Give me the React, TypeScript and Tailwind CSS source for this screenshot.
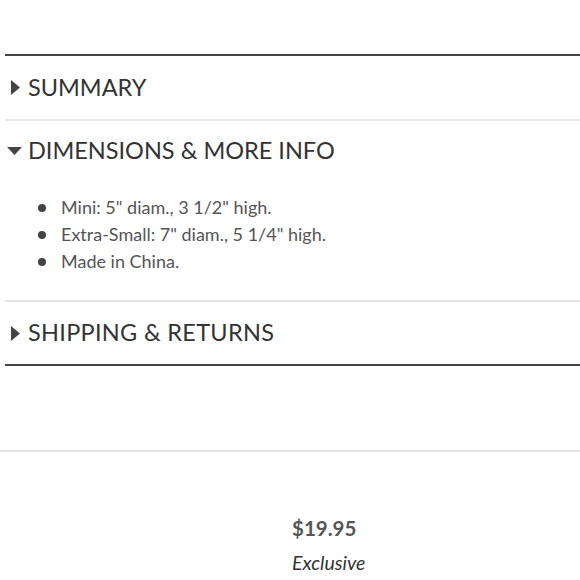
const items = ['Mini: 5" diam., 3 1/2" high.', 'Extra-Small: 7" diam., 5 1/4" high.', "Made in China."];

function RightArrow() {
    return (
        <svg width="9" height="15" viewBox="0 0 9 15" className="shrink-0">
            <path d="M0 0 L9 7.5 L0 15 Z" fill="#444" />
        </svg>
    );
}

function DownArrow() {
    return (
        <svg width="15" height="8" viewBox="0 0 15 8" className="shrink-0">
            <path d="M0 0 L15 0 L7.5 8 Z" fill="#444" />
        </svg>
    );
}

export default function App() {
    return (
        <div className="w-[580px] h-[580px] bg-white overflow-hidden font-['Lato',sans-serif] text-[#333]">
            <div className="h-[54px]" />
            <div className="pl-[5px]">
                <div className="border-t-2 border-[#444]" />
                <div className="h-[63px] flex items-center gap-[8px] pl-[6px]">
                    <RightArrow />
                    <span className="text-[23.5px] leading-none">SUMMARY</span>
                </div>
                <div className="border-t-2 border-[#e6e6e6]" />
                <div className="h-[60px] flex items-center gap-[6px] pl-[2px]">
                    <DownArrow />
                    <span className="text-[23.5px] leading-none">DIMENSIONS &amp; MORE INFO</span>
                </div>
                <ul className="pl-[33px] pt-[13px] pb-[25px] flex flex-col text-[18px] text-[#555]">
                    {items.map((t) => (
                        <li key={t} className="h-[27px] flex items-center gap-[15px]">
                            <span className="w-[8px] h-[8px] rounded-full bg-[#444] inline-block" />
                            {t}
                        </li>
                    ))}
                </ul>
                <div className="border-t-2 border-[#e6e6e6]" />
                <div className="h-[62px] flex items-center gap-[8px] pl-[6px]">
                    <RightArrow />
                    <span className="text-[23.5px] tracking-[0.3px] leading-none">SHIPPING &amp; RETURNS</span>
                </div>
                <div className="border-t-2 border-[#444]" />
            </div>
            <div className="h-[84px]" />
            <div className="border-t-2 border-[#e6e6e6]" />
            <div className="pl-[292px] pt-[66px] flex flex-col gap-[14px]">
                <span className="text-[20.5px] font-bold text-[#555] leading-none">$19.95</span>
                <span className="text-[19.5px] italic text-[#333] leading-none">Exclusive</span>
            </div>
        </div>
    );
}
